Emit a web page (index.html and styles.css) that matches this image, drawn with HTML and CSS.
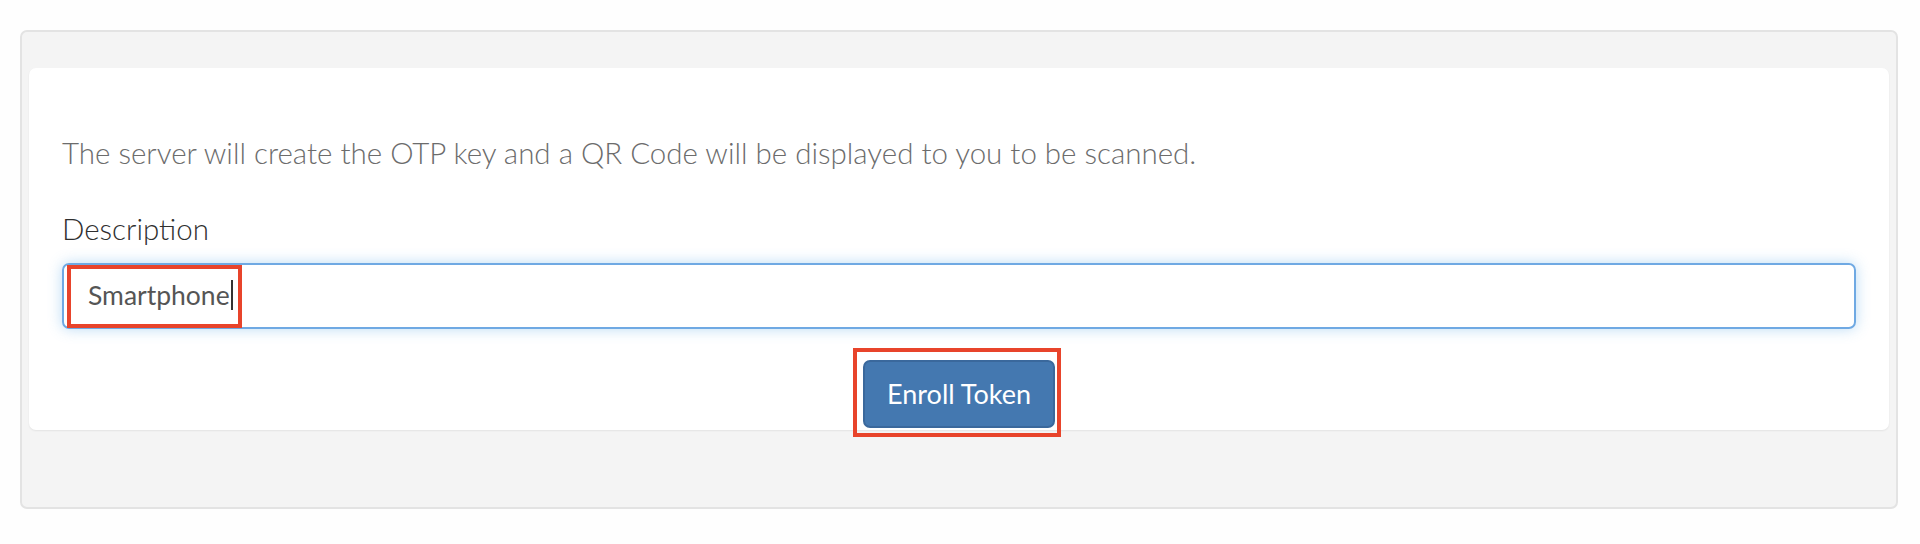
FILE: index.html
```html
<!DOCTYPE html>
<html lang="en">
<head>
<meta charset="utf-8">
<title>Enroll Token</title>
<link rel="stylesheet" href="styles.css">
</head>
<body>
<div class="panel">
  <div class="card">
    <p class="intro">The server will create the OTP key and a QR Code will be displayed to you to be scanned.</p>
    <label class="label">Description</label>
    <div class="input">
      <span class="input-text">Smartphone</span><span class="caret"></span>
      <span class="mark mark-input"></span>
    </div>
    <div class="actions">
      <div class="btn-wrap">
        <button class="btn">Enroll Token</button>
        <span class="mark mark-btn"></span>
      </div>
    </div>
  </div>
</div>
</body>
</html>
```

FILE: styles.css
```css
html, body {
  margin: 0;
  padding: 0;
  background: #fefefe;
}
body {
  font-family: "Lato", "Open Sans", "Liberation Sans", sans-serif;
  width: 1920px;
  height: 544px;
  overflow: hidden;
}
.panel {
  margin: 30px 22px 0 20px;
  background: #f4f4f4;
  border: 2px solid #e3e3e3;
  border-radius: 7px;
  padding: 36px 7px 77px 7px;
}
.card {
  background: #ffffff;
  border-radius: 7px;
  box-shadow: 0 1px 2px rgba(0, 0, 0, 0.07);
  padding: 68px 33px 2px 33px;
  height: 292px;
}
.intro {
  margin: 0;
  font-size: 29.5px;
  line-height: 34px;
  color: #6c6c6c;
  font-weight: 300;
}
.label {
  display: block;
  margin-top: 42px;
  font-size: 29.5px;
  line-height: 34px;
  color: #2f2f2f;
  font-weight: 300;
}
.input {
  position: relative;
  margin-top: 17px;
  height: 66px;
  box-sizing: border-box;
  border: 2px solid #6fa9e3;
  border-radius: 7px;
  box-shadow: 0 0 14px rgba(102, 175, 233, 0.45);
  padding: 0 24px;
  display: flex;
  align-items: center;
  font-size: 26.5px;
  color: #555555;
}
.input-text {
  line-height: 34px;
  margin-top: -2px;
}
.caret {
  display: inline-block;
  width: 2px;
  height: 30px;
  background: #333;
  margin-left: 1px;
  margin-top: -2px;
}
.mark {
  position: absolute;
  box-sizing: border-box;
  border: 4px solid #e8442b;
  pointer-events: none;
}
.mark-input {
  left: 3px;
  top: 0;
  width: 175px;
  height: 63px;
}
.actions {
  display: flex;
  justify-content: center;
  margin-top: 31px;
}
.btn-wrap {
  position: relative;
}
.btn {
  display: block;
  width: 192px;
  height: 68px;
  box-sizing: border-box;
  background: #4478b0;
  border: 2px solid #3a689c;
  border-radius: 7px;
  color: #ffffff;
  font-family: "Lato", "Open Sans", "Liberation Sans", sans-serif;
  font-size: 27px;
  padding: 0 0 2px 0;
}
.mark-btn {
  left: -10px;
  top: -12px;
  width: 208px;
  height: 89px;
}
```
